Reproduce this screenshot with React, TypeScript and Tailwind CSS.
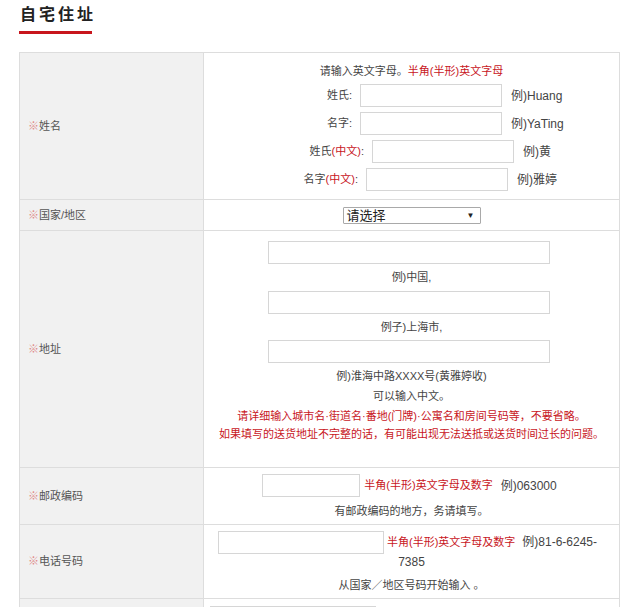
import React from "react";

const font = { fontFamily: '"Liberation Sans", "Noto Sans CJK SC", sans-serif' };

const Req: React.FC<{ label: string }> = ({ label }) => (
  <span className="text-[11px] text-[#555]">
    <span className="text-[#e08a8a]">※</span>
    {label}
  </span>
);

interface RowProps {
  label: string;
  children: React.ReactNode;
  className?: string;
}

const Row: React.FC<RowProps> = ({ label, children, className }) => (
  <div className="flex border-b border-[#dddddd]">
    <div className="w-[184px] shrink-0 bg-[#f1f1f1] border-r border-[#dddddd] flex items-center pl-[8px]">
      <Req label={label} />
    </div>
    <div className={"flex-1 flex flex-col items-center text-[11px] text-[#444] " + (className ?? "")}>
      {children}
    </div>
  </div>
);

const Input: React.FC<{ w: string }> = ({ w }) => (
  <div className={"h-[23px] shrink-0 bg-white border border-[#d6d6d6] " + w} />
);

// label box width sets where the input starts (the reference lines are not evenly centred)
const NameLine: React.FC<{ label: React.ReactNode; example: string; lw: string }> = ({ label, example, lw }) => (
  <div className="flex items-center h-[23px] w-full">
    <span className={"text-right pr-[8px] shrink-0 " + lw}>{label}</span>
    <Input w="w-[142px]" />
    <span className="ml-[9px] text-[12px]">{example}</span>
  </div>
);

export default function App() {
  return (
    <div className="bg-white min-h-[607px] px-[19px]" style={font}>
      <div className="pt-[5px] pl-[1px] text-[16px] leading-[20px] font-bold tracking-[3px] text-[#222]">
        自宅住址
      </div>
      <div className="w-[73px] h-[3px] bg-[#c8161d] mt-[6px]" />

      <div className="w-[601px] mt-[18px] border-t border-l border-r border-[#dddddd]">
        <Row label="姓名" className="pt-[8px] pb-[8px]">
          <div className="leading-[20px] h-[20px]">
            请输入英文字母。<span className="text-[#c8161d]">半角(半形)英文字母</span>
          </div>
          <div className="mt-[3px] flex flex-col gap-[5px] w-full">
            <NameLine lw="w-[156px]" label="姓氏:" example="例)Huang" />
            <NameLine lw="w-[156px]" label="名字:" example="例)YaTing" />
            <NameLine
              lw="w-[168px]"
              label={
                <>
                  姓氏<span className="text-[#c8161d]">(中文)</span>:
                </>
              }
              example="例)黄"
            />
            <NameLine
              lw="w-[162px]"
              label={
                <>
                  名字<span className="text-[#c8161d]">(中文)</span>:
                </>
              }
              example="例)雅婷"
            />
          </div>
        </Row>

        <Row label="国家/地区" className="h-[30px] justify-center">
          <div className="w-[138px] h-[17px] border border-[#a9a9a9] bg-white flex items-center justify-between pl-[3px] pr-[5px] text-[13px] text-[#222] rounded-[1px]">
            <span className="leading-[15px]">请选择</span>
            <span className="text-[8px] leading-[15px]">▼</span>
          </div>
        </Row>

        <Row label="地址" className="pt-[10px] pb-[24px]">
          <div className="mr-[6px]">
            <Input w="w-[282px]" />
          </div>
          <div className="leading-[20px] mt-[3px]">例)中国,</div>
          <div className="mt-[4px] mr-[6px]">
            <Input w="w-[282px]" />
          </div>
          <div className="leading-[20px] mt-[3px]">例子)上海市,</div>
          <div className="mt-[3px] mr-[6px]">
            <Input w="w-[282px]" />
          </div>
          <div className="leading-[20px] mt-[3px]">例)淮海中路XXXX号(黄雅婷收)</div>
          <div className="leading-[20px]">可以输入中文。</div>
          <div className="leading-[18px] mt-[1px] text-[#c8161d] text-center whitespace-nowrap">
            请详细输入城市名·街道名·番地(门牌)·公寓名和房间号码等，不要省略。
            <br />
            如果填写的送货地址不完整的话，有可能出现无法送抵或送货时间过长的问题。
          </div>
        </Row>

        <Row label="邮政编码" className="pt-[6px] pb-[3px]">
          <div className="flex items-center h-[23px] mr-[4px]">
            <Input w="w-[98px]" />
            <span className="ml-[4px] text-[#c8161d]">半角(半形)英文字母及数字</span>
            <span className="ml-[8px] text-[12px]">例)063000</span>
          </div>
          <div className="leading-[20px] mt-[4px]">有邮政编码的地方，务请填写。</div>
        </Row>

        <Row label="电话号码" className="pt-[5px] pb-[3px]">
          <div className="flex items-center h-[24px] mr-[8px]">
            <Input w="w-[166px]" />
            <span className="ml-[3px] text-[#c8161d]">半角(半形)英文字母及数字</span>
            <span className="ml-[7px] text-[12px]">例)81-6-6245-</span>
          </div>
          <div className="leading-[16px] text-[12px]">7385</div>
          <div className="leading-[20px] mt-[5px]">从国家／地区号码开始输入 。</div>
        </Row>

        <Row label="手机号码" className="pt-[6px] pb-[60px]">
          <div className="flex items-center h-[24px] mr-[8px]">
            <Input w="w-[166px]" />
            <span className="ml-[3px] text-[#c8161d]">半角(半形)英文字母及数字</span>
            <span className="ml-[7px] text-[12px]">例)90-1234-5678</span>
          </div>
        </Row>
      </div>
    </div>
  );
}
